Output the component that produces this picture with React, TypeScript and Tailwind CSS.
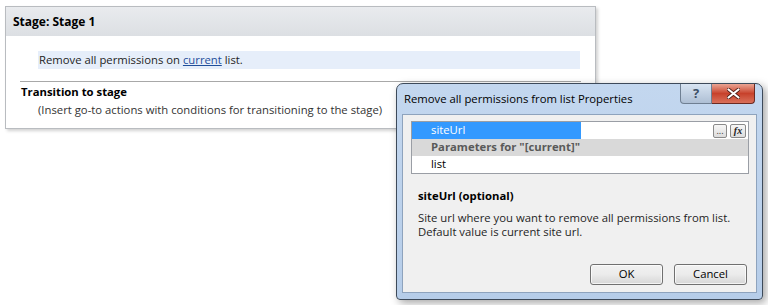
import { ReactNode } from 'react';

const font = "font-['Segoe_UI','Open_Sans',sans-serif]";

function StagePanel() {
  return (
    <div className="ml-[5px] mt-[6px] w-[591px] border border-[#b9bcc0] bg-white shadow-[2px_2px_3px_rgba(0,0,0,0.18)]">
      <div className="flex h-[29px] items-center bg-gradient-to-b from-[#e9ebee] to-[#dcdfe3] pl-[7px] text-[12px] font-bold text-black">
        Stage: Stage 1
      </div>
      <div className="px-[14px] pt-[15px] pb-[9px]">
        <div className="ml-[18px] flex h-[18px] w-[542px] items-center bg-[#e6eefa] pl-[1px] text-[11.3px] text-[#1e1e1e]">
          Remove all permissions on&nbsp;
          <span className="text-[#1f4e9a] underline">current</span>
          &nbsp;list.
        </div>
        <div className="mt-[12px] border-t border-[#a8a8a8] pt-[1px]">
          <div className="pl-[1px] text-[11.3px] font-bold leading-[18px] text-black">Transition to stage</div>
          <div className="pl-[18px] text-[11.3px] leading-[18px] text-[#333]">
            (Insert go-to actions with conditions for transitioning to the stage)
          </div>
        </div>
      </div>
    </div>
  );
}

function GridRow({ className, children }: { className: string; children: ReactNode }) {
  return <div className={`flex h-[17px] items-center pl-[19px] text-[11.3px] ${className}`}>{children}</div>;
}

function DialogButton({ children }: { children: ReactNode }) {
  return (
    <button className="h-[21px] w-[73px] rounded-[3px] border border-[#707070] bg-gradient-to-b from-[#f2f2f2] via-[#ebebeb] to-[#d6d6d6] text-[11.3px] text-black shadow-[inset_0_0_0_1px_rgba(255,255,255,0.7)]">
      {children}
    </button>
  );
}

function PropertiesDialog() {
  return (
    <div className="absolute left-[396px] top-[83px] w-[367px] rounded-t-[7px] rounded-b-[4px] border border-[#3d4a5a] bg-gradient-to-b from-[#c3d7ef] to-[#b6cde9] px-[5px] pb-[6px] shadow-[3px_3px_8px_rgba(0,0,0,0.35)]">
      {/* title bar */}
      <div className="relative flex h-[30px] items-center pl-[2px] pt-[1px] text-[11.3px] text-black">
        Remove all permissions from list Properties
        <div className="absolute right-[2px] top-0 flex">
          <div className="flex h-[20px] w-[32px] items-center justify-center rounded-bl-[4px] border border-t-0 border-[#6f7f92] bg-gradient-to-b from-[#d8e4f2] to-[#aebfd4] text-[13px] font-bold text-[#3c4f66]">
            ?
          </div>
          <div className="flex h-[20px] w-[43px] items-center justify-center rounded-br-[4px] border border-l-0 border-t-0 border-[#6b2a22] bg-gradient-to-b from-[#e9a393] via-[#c7412b] to-[#d9705a]">
            <svg width="13" height="11" viewBox="0 0 13 11">
              <path d="M1.5 1.5 L11.5 9.5 M11.5 1.5 L1.5 9.5" stroke="#4a1a14" strokeWidth="3.6" strokeLinecap="round" />
              <path d="M1.5 1.5 L11.5 9.5 M11.5 1.5 L1.5 9.5" stroke="#ffffff" strokeWidth="2.2" strokeLinecap="round" />
            </svg>
          </div>
        </div>
      </div>
      {/* client area */}
      <div className="h-[179px] border border-[#8ea3bd] bg-[#f0f0f0] px-[8px] pt-[6px]">
        <div className="w-[338px] border border-[#9a9ea5] bg-white">
          <div className="flex h-[17px] items-center">
            <div className="flex h-full w-[169px] items-center bg-[#3399ff] pl-[19px] text-[11.3px] text-white">siteUrl</div>
            <div className="ml-auto mr-[2px] flex gap-[3px]">
              <div className="flex h-[14px] w-[14px] items-end justify-center rounded-[2px] border border-[#8a8a8a] bg-gradient-to-b from-[#f7f7f7] to-[#dcdcdc] pb-[2px] text-[9px] leading-none text-[#333]">
                ...
              </div>
              <div className="flex h-[14px] w-[16px] items-center justify-center rounded-[2px] border border-[#8a8a8a] bg-gradient-to-b from-[#f7f7f7] to-[#dcdcdc] font-['Liberation_Serif',serif] text-[10px] italic font-bold leading-none text-[#222]">
                fx
              </div>
            </div>
          </div>
          <GridRow className="bg-[#d9d9d9] font-bold text-[#595959]">Parameters for &quot;[current]&quot;</GridRow>
          <GridRow className="text-black">list</GridRow>
        </div>
        <div className="mt-[14px] pl-[7px] text-[11.3px] font-bold leading-[16px] text-black">siteUrl (optional)</div>
        <div className="mt-[7px] pl-[7px] text-[11.3px] leading-[14px] text-[#1e1e1e]">
          Site url where you want to remove all permissions from list.
          <br />
          Default value is current site url.
        </div>
        <div className="mt-[25px] flex justify-end gap-[11px] pr-[1px]">
          <DialogButton>OK</DialogButton>
          <DialogButton>Cancel</DialogButton>
        </div>
      </div>
    </div>
  );
}

export default function App() {
  return (
    <div className={`relative h-[305px] w-[768px] overflow-hidden bg-white ${font}`}>
      <StagePanel />
      <PropertiesDialog />
    </div>
  );
}
